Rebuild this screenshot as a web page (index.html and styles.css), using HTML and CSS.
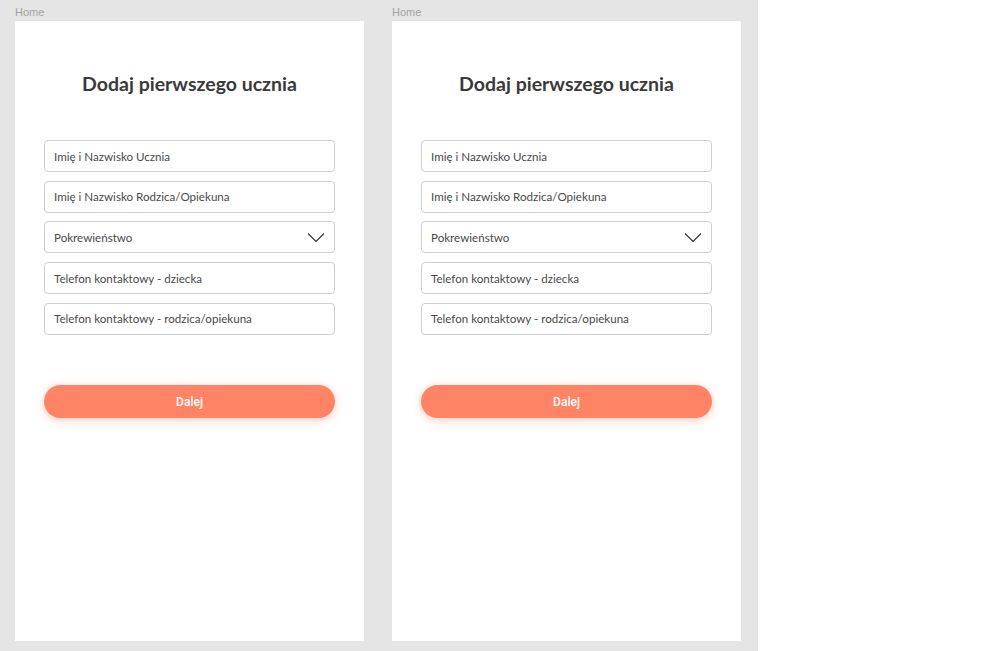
FILE: index.html
```html
<!DOCTYPE html>
<html>
<head>
<meta charset="utf-8">
<link rel="stylesheet" href="styles.css">
</head>
<body>
<div class="canvas">
  <div class="board">
    <div class="label">Home</div>
    <div class="screen">
      <h1 class="title">Dodaj pierwszego ucznia</h1>
      <div class="fields">
        <div class="field">Imię i Nazwisko Ucznia</div>
        <div class="field">Imię i Nazwisko Rodzica/Opiekuna</div>
        <div class="field select">Pokrewieństwo
          <svg class="chev" width="18" height="11" viewBox="0 0 18 11"><path d="M1 1.5 L9 9.5 L17 1.5" fill="none" stroke="#333" stroke-width="1.2"/></svg>
        </div>
        <div class="field">Telefon kontaktowy - dziecka</div>
        <div class="field">Telefon kontaktowy - rodzica/opiekuna</div>
      </div>
      <div class="btn">Dalej</div>
    </div>
  </div>
  <div class="board">
    <div class="label">Home</div>
    <div class="screen">
      <h1 class="title">Dodaj pierwszego ucznia</h1>
      <div class="fields">
        <div class="field">Imię i Nazwisko Ucznia</div>
        <div class="field">Imię i Nazwisko Rodzica/Opiekuna</div>
        <div class="field select">Pokrewieństwo
          <svg class="chev" width="18" height="11" viewBox="0 0 18 11"><path d="M1 1.5 L9 9.5 L17 1.5" fill="none" stroke="#333" stroke-width="1.2"/></svg>
        </div>
        <div class="field">Telefon kontaktowy - dziecka</div>
        <div class="field">Telefon kontaktowy - rodzica/opiekuna</div>
      </div>
      <div class="btn">Dalej</div>
    </div>
  </div>
</div>
</body>
</html>
```
FILE: styles.css
```css
html, body {
  margin: 0;
  padding: 0;
  background: #ffffff;
}
.canvas {
  width: 758px;
  height: 651px;
  background: #e5e5e5;
  display: flex;
  gap: 28px;
  padding-left: 15px;
  box-sizing: border-box;
}
.board {
  display: flex;
  flex-direction: column;
  width: 349px;
}
.label {
  height: 21px;
  font-family: "Liberation Sans", Arial, sans-serif;
  font-size: 11px;
  line-height: 24px;
  color: #a3a3a3;
}
.screen {
  background: #ffffff;
  height: 620px;
  padding: 51px 29px 0;
  box-sizing: border-box;
  display: flex;
  flex-direction: column;
}
.title {
  margin: 0;
  font-family: Lato, "Open Sans", sans-serif;
  font-weight: 700;
  font-size: 19.5px;
  line-height: 24px;
  color: #3a3a3a;
  text-align: center;
}
.fields {
  margin-top: 44px;
  display: flex;
  flex-direction: column;
  gap: 8.7px;
}
.field {
  height: 32px;
  border: 1px solid #cfcfcf;
  border-radius: 4px;
  box-sizing: border-box;
  padding: 0 9px;
  display: flex;
  align-items: center;
  justify-content: space-between;
  font-family: Lato, "Open Sans", sans-serif;
  font-size: 11.6px;
  color: #4a4a4a;
}
.chev {
  margin-right: 0;
}
.btn {
  margin-top: 50px;
  height: 33px;
  padding-top: 2px;
  box-sizing: border-box;
  border-radius: 17px;
  background: #ff8465;
  box-shadow: 0 2px 8px rgba(255, 132, 101, 0.45);
  display: flex;
  align-items: center;
  justify-content: center;
  font-family: Roboto, "Liberation Sans", sans-serif;
  font-weight: 500;
  font-size: 12px;
  color: #ffffff;
}
```
